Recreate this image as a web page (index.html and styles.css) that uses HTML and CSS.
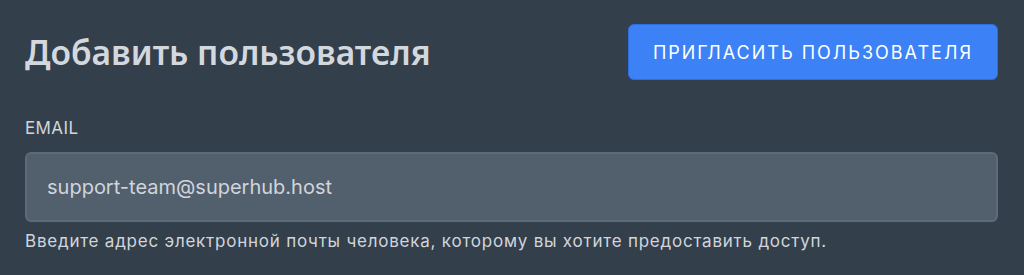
FILE: index.html
```html
<!DOCTYPE html>
<html lang="ru">

<head>
    <meta charset="UTF-8">
    <meta name="viewport" content="width=device-width, initial-scale=1.0">
    <link rel="stylesheet" href="styles.css">
</head>

<body>

    <div class="panel">
        <div class="panel-header">
            <h1 class="panel-title">Добавить пользователя</h1>
            <button class="invite-button">Пригласить пользователя</button>
        </div>

        <div class="field">
            <label class="field-label" for="email">Email</label>
            <input type="text" id="email" class="field-input" value="support-team@superhub.host">
            <p class="field-help">Введите адрес электронной почты человека, которому вы хотите предоставить доступ.</p>
        </div>
    </div>

</body>

</html>
```

FILE: styles.css
```css
body {
    margin: 0;
    padding: 0;
    background-color: #343f4c;
    font-family: Inter, "Noto Sans", sans-serif;
    color: #d1d5db;
    overflow: hidden;
}

.panel {
    padding: 24px 26px 0 25px;
}

.panel-header {
    display: flex;
    align-items: center;
    justify-content: space-between;
}

.panel-title {
    margin: 0;
    font-family: "Noto Sans", sans-serif;
    font-size: 33.6px;
    font-weight: 600;
    color: #d3d8de;
}

.invite-button {
    height: 56px;
    padding: 0 24px;
    background-color: #3c82f6;
    color: #fff;
    border: 1px solid #2e6fe0;
    border-radius: 6px;
    font-family: Inter, sans-serif;
    font-size: 18px;
    text-transform: uppercase;
    letter-spacing: 2px;
    cursor: pointer;
}

.field {
    margin-top: 38px;
}

.field-label {
    display: block;
    font-size: 17px;
    letter-spacing: 0.4px;
    text-transform: uppercase;
    color: #d1d5db;
}

.field-input {
    display: block;
    box-sizing: border-box;
    width: 100%;
    height: 70px;
    margin-top: 14px;
    padding: 0 20px;
    background-color: #525f6d;
    border: 2px solid #5d6a78;
    border-radius: 6px;
    font-family: Inter, sans-serif;
    font-size: 20px;
    color: #d1d5db;
    outline: none;
}

.field-help {
    margin: 9px 0 0;
    font-size: 17px;
    letter-spacing: 0.77px;
    color: #d1d5db;
}
```
